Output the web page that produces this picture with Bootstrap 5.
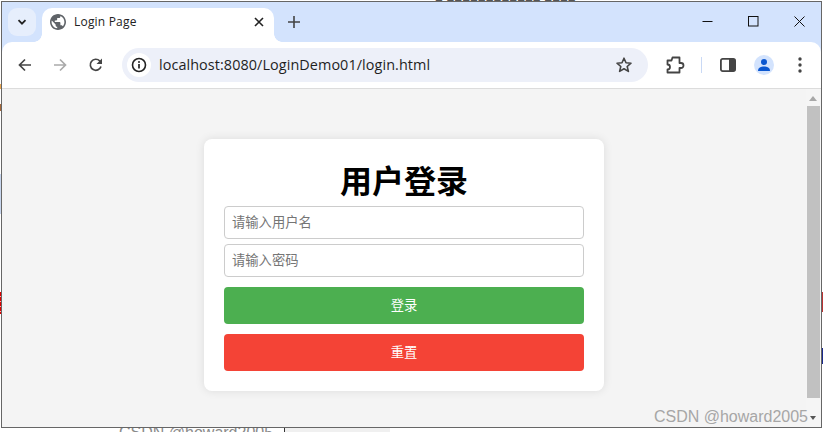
<!DOCTYPE html>
<html lang="zh">
<head>
<meta charset="utf-8">
<title>Login Page</title>
<link rel="stylesheet" href="https://cdn.jsdelivr.net/npm/bootstrap@5.3.0/dist/css/bootstrap.min.css">
<style>
html,body{height:432px;overflow:hidden;background:#fff}
body{font-family:"Noto Sans","Noto Sans CJK SC",sans-serif;position:relative;padding:1px 1px 0 1px}
.browser-win{height:427px;width:821px;border:1px solid #666;background:#f4f4f4;position:relative;z-index:1}
.chrome-head{background:#d3e3fd}
.title-strip{height:40px;padding-left:6px}
.tab-menu{width:28px;height:28px;margin-top:6px;background:#e6eefc;border-radius:9px}
.tab-shape{width:232px;height:34px;margin-top:6px;margin-left:6px;background:#fff;border-radius:10px 10px 0 0;padding:0 10px 6px 8px;font-size:12px;color:#222;letter-spacing:.2px;position:relative}
.tab-shape::before,.tab-shape::after{content:"";position:absolute;bottom:0;width:8px;height:8px}
.tab-shape::before{left:-8px;background:radial-gradient(circle at 0 0,transparent 7.5px,#fff 8px)}
.tab-shape::after{right:-8px;background:radial-gradient(circle at 100% 0,transparent 7.5px,#fff 8px)}
.tab-label{margin-left:8px;font-family:"Open Sans",sans-serif}
.new-tab{margin:6px 0 0 14px;width:12px;height:28px}
.win-btns{margin-left:auto;width:119px;height:38px;padding-right:16px}
.tool-strip{height:47px;background:#fff;border-bottom:1px solid #dcdcdc;border-radius:10px 10px 0 0;padding-left:13px}
.nav-ic{width:20px;height:20px}
.nav-two{margin-left:15px}
.nav-three{margin-left:16px}
.omni{width:526px;height:34px;background:#edf0f9;border-radius:17px;margin-left:16px;padding:0 15px 0 5px}
.info-dot{width:24px;height:24px;background:#fff;border-radius:50%;margin-right:8px}
.omni-url{font-size:14.4px;color:#1f1f1f;font-family:"Open Sans",sans-serif;letter-spacing:.08px}
.ext-ic{margin-left:17px}
.sep-bar{width:1px;height:16px;background:#c9d9f5;margin:0 18px 0 16px}
.avatar-ring{width:20px;height:20px;background:#d3e3fd;border-radius:50%;margin:0 24px 0 18px}
.page-area{height:338px;position:relative;padding:50px 0 0 202px}
.login-panel{width:400px;height:252px;background:#fff;border-radius:8px;box-shadow:0 0 10px rgba(0,0,0,.1);padding:20px}
.login-title{font-size:32px;font-weight:700;color:#000;line-height:43px;padding-bottom:4px;text-align:center;margin:0}
.login-field{height:33px;border:1px solid #ccc;border-radius:4px;padding:0 7px 2px;font-size:13.3px;margin-bottom:5px}
.login-field::placeholder{color:#757575}
.login-btn{height:37px;border:0;border-radius:4px;color:#fff;font-size:13.3px;padding:0;display:block;margin-bottom:10px}
.go-green{background:#4caf50;margin-top:10px}
.go-red{background:#f44336}
.login-btn:hover{color:#fff}
.scroll-rail{position:absolute;right:0;top:0;width:15px;height:338px;background:#f5f5f5}
.scroll-up{position:absolute;left:3px;top:7px;border:4px solid transparent;border-top:0;border-bottom:5px solid #a8a8a8}
.scroll-thumb{position:absolute;left:1px;top:17px;width:13px;height:292px;background:#c1c1c1}
.watermark{position:absolute;right:5px;bottom:1px;font:16px/18px "Liberation Sans",sans-serif;color:#a6a6a6;z-index:2}
.watermark-caret{display:inline-block;border:3.5px solid transparent;border-top:4px solid #555;border-bottom:0;margin-left:2px;vertical-align:2px}
.under-strip{height:4px;overflow:hidden;position:relative}
.under-text{position:absolute;left:118px;top:-3px;font:16px/15px "Liberation Sans",sans-serif;color:#8a8a8a}
.under-line{position:absolute;left:283px;top:0;width:1px;height:4px;background:#333}
.under-box{position:absolute;left:284px;top:0;width:105px;height:4px;background:#f0f0f0}
.edge-mark{position:absolute;left:0;width:1px;z-index:0}
.edge-red{background:repeating-linear-gradient(#e00000 0 4px,#f6b0b0 4px 5px);top:292px;height:22px}
.edge-blue{background:#c8d6ee;top:174px;height:40px}
.edge-brown{background:#a5683a;top:104px;height:7px}
.edge-orange{background:#e8a550;top:84px;height:5px}
.edge-right{position:absolute;right:0;top:348px;height:16px;width:1px;background:#1a2a8c;z-index:2}
.edge-right2{position:absolute;right:0;top:292px;height:20px;width:1px;background:#b33;z-index:2}
.top-frag{position:absolute;left:435px;top:0;font:13px/6px "Liberation Sans","Noto Sans CJK SC",sans-serif;height:1px;overflow:hidden;color:#555;z-index:0;width:170px}
</style>
</head>
<body>
<div class="top-frag">■ ■■■■■■■■■■■■ ■■■■</div>
<div class="edge-mark edge-red"></div>
<div class="edge-mark edge-blue"></div>
<div class="edge-mark edge-brown"></div>
<div class="edge-mark edge-orange"></div>
<div class="edge-right"></div>
<div class="edge-right2"></div>
<div class="browser-win">
  <div class="chrome-head">
  <div class="title-strip d-flex align-items-start">
    <div class="tab-menu d-flex align-items-center justify-content-center">
      <svg width="12" height="12" viewBox="0 0 12 12"><path d="M2.500 4.200L6 7.700l3.500-3.500" fill="none" stroke="#222" stroke-width="1.800"/></svg>
    </div>
    <div class="tab-shape d-flex align-items-center">
      <svg width="16" height="16" viewBox="2 2 20 20"><path fill="#5f6368" d="M12 2C6.480 2 2 6.480 2 12s4.480 10 10 10 10-4.480 10-10S17.520 2 12 2zm-1 17.930c-3.950-.490-7-3.850-7-7.930 0-.620.080-1.210.210-1.790L9 15v1c0 1.100.900 2 2 2v1.930zm6.900-2.540c-.260-.810-1-1.390-1.900-1.390h-1v-3c0-.550-.450-1-1-1H8v-2h2c.550 0 1-.450 1-1V7h2c1.100 0 2-.900 2-2v-.410c2.930 1.190 5 4.060 5 7.410 0 2.080-.800 3.970-2.100 5.390z"/></svg>
      <span class="tab-label">Login Page</span>
      <svg class="ms-auto" width="10" height="10" viewBox="0 0 10 10"><path d="M1 1l8 8M9 1l-8 8" stroke="#222" stroke-width="1.600"/></svg>
    </div>
    <div class="new-tab d-flex align-items-center">
      <svg width="12" height="12" viewBox="0 0 12 12"><path d="M6 0v12M0 6h12" stroke="#444" stroke-width="1.600"/></svg>
    </div>
    <div class="win-btns d-flex align-items-center justify-content-between">
      <svg width="11" height="11" viewBox="0 0 11 11"><path d="M.5 5.500h10" stroke="#111" stroke-width="1"/></svg>
      <svg width="11" height="11" viewBox="0 0 11 11"><rect x=".5" y=".5" width="9.500" height="9.500" fill="none" stroke="#111"/></svg>
      <svg width="11" height="11" viewBox="0 0 11 11"><path d="M.5.5l10 10M10.500.5l-10 10" stroke="#111"/></svg>
    </div>
  </div>
  <div class="tool-strip d-flex align-items-center">
    <svg class="nav-ic" viewBox="0 0 20 20"><path d="M16 10H5M10 4.500L4.500 10l5.500 5.500" fill="none" stroke="#444" stroke-width="1.700"/></svg>
    <svg class="nav-ic nav-two" viewBox="0 0 20 20"><path d="M4 10h11M10 4.500l5.500 5.500-5.500 5.500" fill="none" stroke="#aaa" stroke-width="1.700"/></svg>
    <svg class="nav-ic nav-three" viewBox="0 0 20 20"><path d="M15 11.500A5.500 5.500 0 1 1 13.800 6L15.500 8" fill="none" stroke="#444" stroke-width="1.700"/><path d="M16 3.500V9h-5.500z" fill="#444"/></svg>
    <div class="omni d-flex align-items-center">
      <div class="info-dot d-flex align-items-center justify-content-center">
        <svg width="16" height="16" viewBox="0 0 16 16"><circle cx="8" cy="8" r="6.500" fill="none" stroke="#222" stroke-width="1.600"/><path d="M8 7v4.500" stroke="#222" stroke-width="1.700"/><circle cx="8" cy="5" r="1" fill="#222"/></svg>
      </div>
      <span class="omni-url">localhost:8080/LoginDemo01/login.html</span>
      <svg class="ms-auto" width="18" height="18" viewBox="0 0 18 18"><path d="M9 2.200l2 4.600 5 .4-3.800 3.300 1.200 4.900L9 12.800l-4.400 2.600 1.200-4.900L2 7.200l5-.4z" fill="none" stroke="#444" stroke-width="1.600" stroke-linejoin="round"/></svg>
    </div>
    <svg class="ext-ic" width="20" height="20" viewBox="0 0 20 20"><path d="M2.500 5.500H6.500L7.500 2.500H14.500V8H16a2.500 2.500 0 0 1 0 5H14.500V17.500H2.500V14.500a2.500 2.500 0 0 0 0-5z" fill="none" stroke="#444" stroke-width="1.800" stroke-linejoin="round"/></svg>
    <div class="sep-bar"></div>
    <svg width="16" height="16" viewBox="0 0 16 16"><rect x=".9" y="1.900" width="14.200" height="12.200" rx="1.800" fill="#fff" stroke="#444" stroke-width="1.800"/><rect x="9" y="2" width="6" height="12" fill="#444"/></svg>
    <div class="avatar-ring d-flex align-items-center justify-content-center">
      <svg width="14" height="14" viewBox="0 0 14 14"><circle cx="7" cy="4" r="3" fill="#0b57d0"/><path d="M1 13c0-3.500 3-4.500 6-4.500s6 1 6 4.500z" fill="#0b57d0"/></svg>
    </div>
    <svg width="4" height="16" viewBox="0 0 4 16"><circle cx="2" cy="2" r="1.700" fill="#444"/><circle cx="2" cy="8" r="1.700" fill="#444"/><circle cx="2" cy="14" r="1.700" fill="#444"/></svg>
  </div>
  </div>
  <div class="page-area">
    <div class="login-panel">
      <h1 class="login-title">用户登录</h1>
      <input class="form-control login-field" type="text" placeholder="请输入用户名">
      <input class="form-control login-field" type="password" placeholder="请输入密码">
      <button class="btn w-100 login-btn go-green" type="button">登录</button>
      <button class="btn w-100 login-btn go-red" type="button">重置</button>
    </div>
    <div class="scroll-rail"><div class="scroll-up"></div><div class="scroll-thumb"></div></div>
    <div class="watermark">CSDN @howard2005<span class="watermark-caret"></span></div>
  </div>
</div>
<div class="under-strip">
  <span class="under-text">CSDN @howard2005</span>
  <div class="under-box"></div>
  <div class="under-line"></div>
</div>
<script src="https://cdn.jsdelivr.net/npm/bootstrap@5.3.0/dist/js/bootstrap.bundle.min.js"></script>
</body>
</html>
